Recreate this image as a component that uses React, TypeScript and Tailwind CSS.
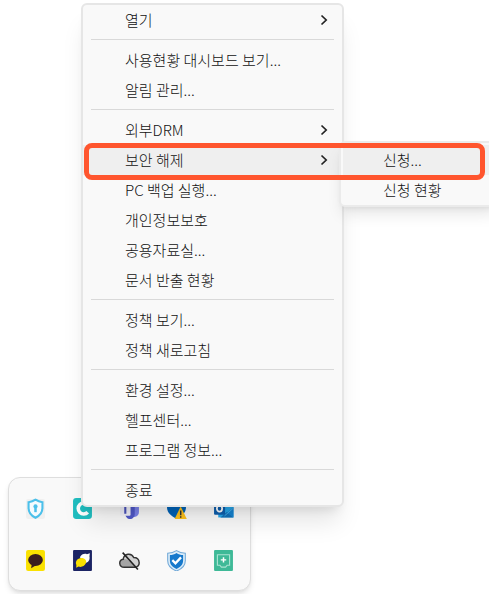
import type { ReactNode } from 'react';

type MenuEntry = {
  label: string;
  hasSubmenu?: boolean;
  active?: boolean;
};

type TrayItem = {
  name: string;
  icon: ReactNode;
};

const menuGroups: MenuEntry[][] = [
  [{ label: '열기', hasSubmenu: true }],
  [{ label: '사용현황 대시보드 보기...' }, { label: '알림 관리...' }],
  [
    { label: '외부DRM', hasSubmenu: true },
    { label: '보안 해제', hasSubmenu: true, active: true },
    { label: 'PC 백업 실행...' },
    { label: '개인정보보호' },
    { label: '공용자료실...' },
    { label: '문서 반출 현황' },
  ],
  [{ label: '정책 보기...' }, { label: '정책 새로고침' }],
  [{ label: '환경 설정...' }, { label: '헬프센터...' }, { label: '프로그램 정보...' }],
  [{ label: '종료' }],
];

const trayItems: TrayItem[] = [
  {
    name: 'Security',
    icon: (
      <>
        <rect x="1" y="1" width="18" height="19" rx="2" fill="#f0f0f0" />
        <path d="M10 1.6 C12 3 14 3.8 16.6 4 V9.5 C16.6 14 13.8 17 10 18.8 C6.2 17 3.4 14 3.4 9.5 V4 C6 3.8 8 3 10 1.6 Z" fill="#f5fbfe" stroke="#4cc0ea" strokeWidth="2" />
        <circle cx="10" cy="8" r="2" fill="#4cc0ea" />
        <path d="M10 8 V13.5" stroke="#4cc0ea" strokeWidth="2.4" />
      </>
    ),
  },
  {
    name: 'Cloud',
    icon: (
      <>
        <rect x="1" width="18" height="20" rx="3" fill="#20bec0" />
        <path d="M15 6.5 A5.2 5.2 0 1 0 15 13.5" fill="none" stroke="#fff" strokeWidth="3.4" />
      </>
    ),
  },
  {
    name: 'Teams',
    icon: (
      <>
        <path d="M11 5 H19 V13 C19 16 17 18 14 18 Z" fill="#7b83eb" />
        <path d="M6 5 H15 V15 C15 18 13 20 10.5 20 C8 20 6 18 6 15 Z" fill="#5059c9" />
        <rect x="1" y="5" width="10" height="12" rx="1" fill="#f1f1fa" />
        <path d="M3 7 H9 M6 7 V15" stroke="#4b53bc" strokeWidth="2" />
      </>
    ),
  },
  {
    name: 'Defender',
    icon: (
      <>
        <path d="M10 0 L19 3 V9 C19 14 15 17.5 10 19.5 C5 17.5 1 14 1 9 V3 Z" fill="#0063b8" />
        <path d="M14 8 L19.8 20 H8.2 Z" fill="#ffc21c" />
        <path d="M14 12 V16.5 M14 17.4 V18.8" stroke="#333" strokeWidth="1.4" />
      </>
    ),
  },
  {
    name: 'Outlook',
    icon: (
      <>
        <path d="M5 3 H19.5 V18.5 H5 Z" fill="#28a8ea" />
        <path d="M7 18.5 L13.5 13 L19.5 18.5 Z" fill="#1370b8" />
        <path d="M5 8 L13.5 14 L19.5 8.5 V18.5 Z" fill="#1684d2" />
        <path d="M11 17 L19 10" stroke="#50b8f0" strokeWidth=".8" />
        <rect x="1" y="4" width="10.5" height="12" rx="1" fill="#0f5fae" />
        <ellipse cx="6.2" cy="10" rx="2.5" ry="3" fill="none" stroke="#fff" strokeWidth="1.7" />
      </>
    ),
  },
  {
    name: 'Talk',
    icon: (
      <>
        <rect x="1" width="18" height="20" rx="2" fill="#fae100" />
        <ellipse cx="10" cy="9.5" rx="7" ry="5.7" fill="#3b1e1e" />
        <path d="M6.5 13 L5.8 17.4 L10.5 14.5 Z" fill="#3b1e1e" />
      </>
    ),
  },
  {
    name: 'Messenger',
    icon: (
      <>
        <rect x="1" width="18" height="20" rx="1" fill="#1c2464" />
        <path d="M7.5 7 C9 3.5 12.5 3.2 14.2 4 L17 3 L16.6 6 C17.4 9.5 15.5 12 12.5 12.5 Z" fill="#fff" />
        <path d="M4 17 L4.2 14.2 C2.6 11 5.3 7.5 8.8 7.5 C12.5 7.5 14.3 10 13.2 12.7 C12 15.8 8.5 16.6 6.3 15.8 Z" fill="#fae100" />
      </>
    ),
  },
  {
    name: 'OneDrive',
    icon: (
      <>
        <path d="M5 16.5 C-.5 16.5 -.5 9.5 4 8.8 C5 3 12 2.5 14 7.2 C20.5 7.2 21 16.5 15 16.5 Z" fill="#d2d2d2" />
        <path d="M4 8.8 C7 8 9 10 11 12 L15 16.5 H5 C0 16.5 0 9.5 4 8.8 Z" fill="#a5a5a5" />
        <path d="M5 16.5 C-.5 16.5 -.5 9.5 4 8.8 C5 3 12 2.5 14 7.2 C20.5 7.2 21 16.5 15 16.5 Z" fill="none" stroke="#333" strokeWidth="1.4" />
        <path d="M3.5 2.5 L18 18.5" stroke="#222" strokeWidth="1.5" />
      </>
    ),
  },
  {
    name: 'Protection',
    icon: (
      <>
        <path d="M10 .6 C13 2.6 15 3 18.4 3 V10 C18.4 15 14.5 18.3 10 20 C5.5 18.3 1.6 15 1.6 10 V3 C5 3 7 2.6 10 .6 Z" fill="#dcecf8" stroke="#71a9d8" strokeWidth="1" />
        <path d="M10 2.8 C12 4.3 14 4.7 16.3 4.8 V10 C16.3 14 13.3 16.7 10 18 C6.7 16.7 3.7 14 3.7 10 V4.8 C6 4.7 8 4.3 10 2.8 Z" fill="#1679cc" />
        <path d="M6 9.7 L9 12.7 L14.3 7" fill="none" stroke="#fff" strokeWidth="2.2" />
      </>
    ),
  },
  {
    name: 'Add device',
    icon: (
      <>
        <rect x="1" width="18" height="20" rx="1" fill="#3eb997" />
        <path d="M4.2 4.5 H15.8 V14.5 H13.5 L12 16.3 H8 L6.5 14.5 H4.2 Z" fill="none" stroke="#a9e3d2" strokeWidth="1.1" />
        <path d="M10 6.8 V12 M7.4 9.4 H12.6" stroke="#fff" strokeWidth="1.4" />
      </>
    ),
  },
];

const ChevronIcon = () => (
  <svg className="h-3 w-2" viewBox="0 0 8 12" fill="none" stroke="#222" strokeWidth="1.7" aria-hidden="true">
    <path d="M1.5 1.5 L6.2 6 L1.5 10.5" />
  </svg>
);

const Submenu = () => (
  <div className="absolute -top-1 left-64 w-40 rounded-md border-2 border-[#ebebeb] bg-[#f9f9f9] pl-[2px] pt-[2px] shadow-lg">
    <button className="block h-[30px] w-full bg-[#efefef] pl-10 text-left">신청...</button>
    <button className="block h-[30px] w-full pl-10 text-left">신청 현황</button>
  </div>
);

const ContextMenu = () => (
  <nav className="relative z-10 w-[263px] rounded-md border-2 border-[#e6e6e6] bg-[#f9f9f9] shadow-xl">
    {menuGroups.map((group, index) => (
      <div key={group[0].label}>
        {index > 0 && <hr className="mx-2 mb-[5px] mt-1 border-[#d9d9d9]" />}
        {group.map((entry) => (
          <div key={entry.label} className="relative">
            <button
              className={`flex h-[30px] w-full items-center justify-between pl-[42px] pr-[14px] ${
                entry.active ? 'bg-[#efefef]' : ''
              }`}
            >
              {entry.label}
              {entry.hasSubmenu && <ChevronIcon />}
            </button>
            {entry.active && (
              <>
                <Submenu />
                {/* Highlight frame */}
                <div className="pointer-events-none absolute -top-[2px] left-px h-[37px] w-[401px] rounded-lg border-5 border-[#ff552e]" />
              </>
            )}
          </div>
        ))}
      </div>
    ))}
  </nav>
);

const Tray = () => (
  <section className="absolute left-2 top-[477px] rounded-xl border border-[#dedede] bg-[#f9f9f9] px-4 pb-[19px] pt-5 shadow-md">
    <div className="grid grid-cols-5 gap-x-[26px] gap-y-[31px]">
      {trayItems.map((item) => (
        <button key={item.name} aria-label={item.name}>
          <svg className="h-[21px] w-[21px]" viewBox="0 0 20 20" aria-hidden="true">
            {item.icon}
          </svg>
        </button>
      ))}
    </div>
  </section>
);

const App = () => {
  return (
    <main className="relative min-h-screen overflow-hidden bg-white pl-[81px] pt-[3px] font-['Noto_Sans_CJK_KR',sans-serif] text-[15px] font-light leading-5 text-[#111]">
      <Tray />
      <ContextMenu />
    </main>
  );
};

export default App;
